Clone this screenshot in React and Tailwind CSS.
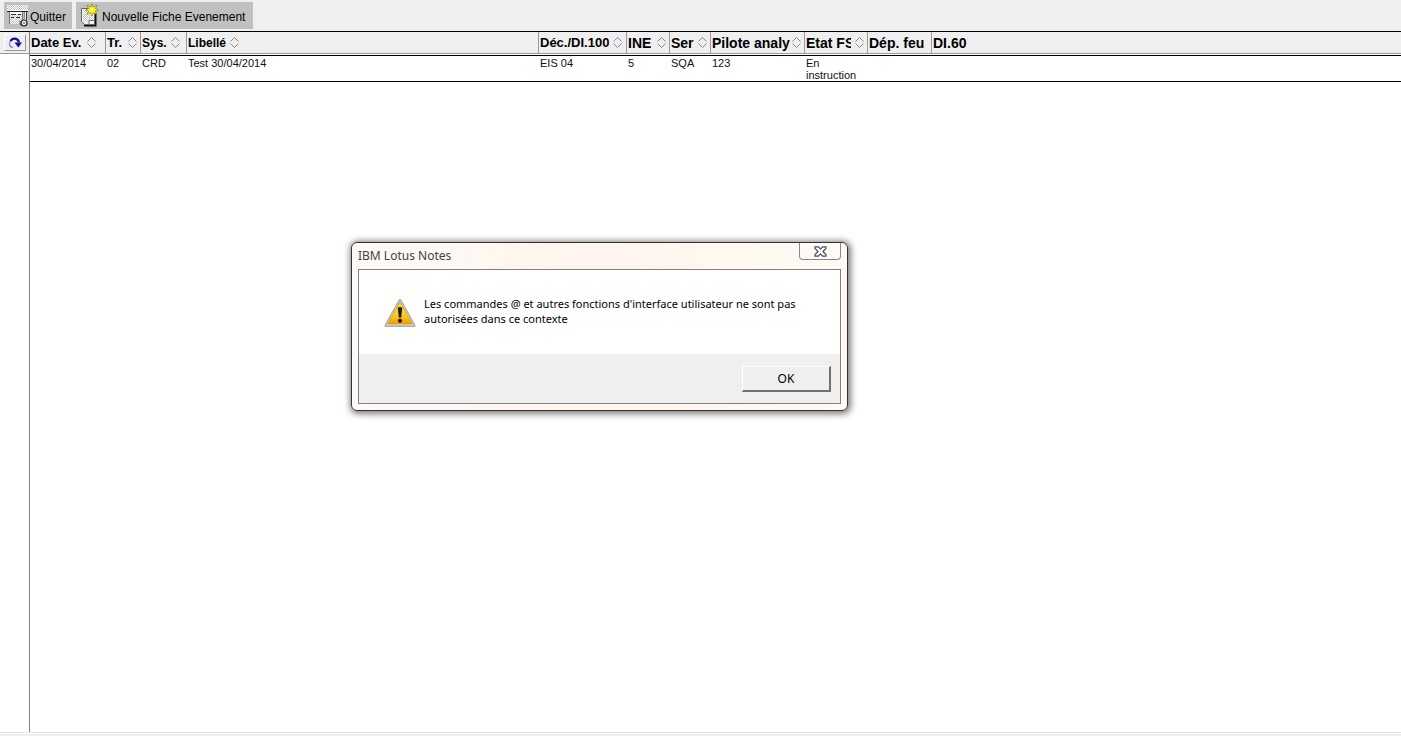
import { useState } from "react";

const columns = [
  { id: "date", label: "Date Ev.", width: "w-[76px]", text: "gap-1.5 text-[13px]", sortable: true },
  { id: "tr", label: "Tr.", width: "w-[35px]", text: "gap-1.5 text-[13px]", sortable: true },
  { id: "sys", label: "Sys.", width: "w-[46px]", text: "gap-1 text-[12px]", sortable: true },
  { id: "label", label: "Libellé", width: "w-[352px]", text: "gap-1 text-[12px]", sortable: true },
  { id: "dec", label: "Déc./DI.100", width: "w-[88px]", text: "gap-1 text-[13px]", sortable: true },
  { id: "ine", label: "INE", width: "w-[43px]", text: "justify-between text-[14px]", sortable: true },
  { id: "ser", label: "Ser", width: "w-[41px]", text: "justify-between text-[14px]", sortable: true },
  { id: "pilote", label: "Pilote analy", width: "w-[94px]", text: "justify-between text-[14px]", sortable: true },
  { id: "etat", label: "Etat FS", width: "w-[63px]", text: "gap-1 text-[14px]", sortable: true },
  { id: "dep", label: "Dép. feu", width: "w-[64px]", text: "text-[14px]", sortable: false },
  { id: "di60", label: "DI.60", width: "", text: "text-[14px]", sortable: false },
];

const rows = [
  {
    date: "30/04/2014",
    tr: "02",
    sys: "CRD",
    label: "Test 30/04/2014",
    dec: "EIS 04",
    ine: "5",
    ser: "SQA",
    pilote: "123",
    etat: "En instruction",
    dep: "",
    di60: "",
  },
];

function QuitIcon() {
  return (
    <svg width="22" height="22" viewBox="0 0 22 22" shapeRendering="crispEdges">
      <defs>
        <pattern id="dither" width="2" height="2" patternUnits="userSpaceOnUse">
          <rect width="2" height="2" fill="#c4c4c4" />
          <rect width="1" height="1" fill="#fff" />
          <rect x="1" y="1" width="1" height="1" fill="#fff" />
        </pattern>
      </defs>
      <rect width="21" height="6" fill="url(#dither)" />
      <rect y="5" width="21" height="1" fill="#fff" />
      <rect y="6" width="21" height="1" fill="#222" />
      <rect x="2" y="7" width="14" height="12" fill="#fff" />
      <rect x="3" y="9" width="12" height="10" fill="url(#dither)" />
      <path d="M4 9.500h5M11 9.500h3M4 12.500h3M9 12.500h4" stroke="#333" />
      <path d="M2.500 7v12M15.500 7v9" stroke="#777" />
      <path d="M17 7h3v8h-3z" fill="#f4f4f4" />
      <path d="M19.500 7v8" stroke="#333" />
      <path d="M17.500 7v7" stroke="#888" />
      <g shapeRendering="auto">
        <path d="M12.500 16.500l3 1.500M12.500 18.500l2 1.500" stroke="#222" />
        <circle cx="17" cy="18" r="3" fill="#eee" stroke="#222" strokeWidth="1.200" />
        <circle cx="17" cy="18" r="1" fill="#777" />
      </g>
    </svg>
  );
}

function NewDocIcon() {
  return (
    <svg width="20" height="24" viewBox="0 0 20 24">
      <path d="M4 21.500h11.500V9" fill="none" stroke="#111" strokeWidth="2" />
      <path d="M1.500 4.500h13v16h-10l-3-3z" fill="#f1f1f1" stroke="#666" />
      <rect x="3" y="6" width="10" height="11" fill="url(#dither)" />
      <path d="M9 20.500v-4h5" fill="#fff" stroke="#666" />
      <path
        d="M12 0l1.200 3L17 1.500 15.400 4.600 18.500 6l-3.100 1 1.600 3.500-3.600-1.700L12 12l-1.300-3.200L7 10.500 8.600 7 5.500 6l3.100-1.400L7 1.500 10.700 3z"
        fill="#f5ee24"
        stroke="#77751a"
        strokeWidth=".6"
      />
      <circle cx="12" cy="5.800" r="1.500" fill="#fffdb0" />
    </svg>
  );
}

function RefreshIcon() {
  return (
    <svg width="14" height="12" viewBox="0 0 14 12">
      <path d="M5 10.500C1 10 .5 5.500 3 3.500" fill="none" stroke="#8b93cf" strokeWidth="1.500" />
      <path d="M2.500 4C4.500.500 10 .500 11 5.500" fill="none" stroke="#10109a" strokeWidth="2.200" />
      <path d="M6.500 5.500H14L10.300 10.500z" fill="#10109a" />
    </svg>
  );
}

function SortIcon() {
  return (
    <svg className="shrink-0" width="9" height="11" viewBox="0 0 9 11">
      <path d="M.5 4.500l4-4 4 4M.5 6.500l4 4 4-4" fill="none" stroke="#888" />
    </svg>
  );
}

function WarningIcon() {
  return (
    <svg className="shrink-0" width="32" height="30" viewBox="0 0 32 30">
      <defs>
        <linearGradient id="warn" x1="0" y1="0" x2="0" y2="1">
          <stop offset="0" stopColor="#f0dc3a" />
          <stop offset=".55" stopColor="#fbd21c" />
          <stop offset="1" stopColor="#f39a08" />
        </linearGradient>
      </defs>
      <path d="M16 2.500L30 27.500H2z" fill="#c9cbd0" stroke="#a9abb0" strokeWidth="3" strokeLinejoin="round" />
      <path d="M16 3L29.500 27h-27z" fill="#dcdde0" stroke="#dcdde0" strokeLinejoin="round" />
      <path d="M16 4L28.500 26h-25z" fill="url(#warn)" stroke="#d99b08" strokeWidth=".8" strokeLinejoin="round" />
      <path d="M13.800 10q2.200-1.800 4.400 0l-1 9.500h-2.400z" fill="#1c1a08" />
      <circle cx="16" cy="22.800" r="2.100" fill="#1c1a08" />
    </svg>
  );
}

function CloseIcon() {
  return (
    <svg width="13" height="11" viewBox="0 0 13 11">
      <path
        d="M1 .8h3.500l2 2.300 2-2.300H12v1.500L9 5.500l3 3.200v1.500H8.500l-2-2.300-2 2.300H1V8.700l3-3.200-3-3.200z"
        fill="#fff"
        stroke="#44495c"
        strokeWidth="1.200"
        strokeLinejoin="round"
      />
    </svg>
  );
}

function Toolbar() {
  return (
    <div className="flex h-8 items-start gap-1 border-b border-black bg-[#efefef] px-1 pt-0.5 text-[12px]">
      <button type="button" className="flex h-[27px] items-center gap-px bg-[#c0c0c0] pr-1.5 pl-[3px]">
        <QuitIcon />
        <span className="pt-0.5">Quitter</span>
      </button>
      <button type="button" className="flex h-[27px] items-center gap-0.5 bg-[#c0c0c0] pr-2 pl-1">
        <NewDocIcon />
        <span className="pt-0.5">Nouvelle Fiche Evenement</span>
      </button>
    </div>
  );
}

function EventTable() {
  return (
    <table className="w-full table-fixed border-separate border-spacing-0 text-left">
      <thead>
        <tr className="bg-[#efefef]">
          {columns.map((col) => (
            <th
              key={col.id}
              className={`${col.width} h-[22px] border-r border-b border-[#9a9a9a] p-0 font-bold last:border-r-0`}
            >
              {col.sortable ? (
                <button type="button" className={`flex w-full items-center pr-[3px] pl-px leading-5 ${col.text}`}>
                  <span className="min-w-0 overflow-hidden whitespace-nowrap">{col.label}</span>
                  <SortIcon />
                </button>
              ) : (
                <span className={`block pl-px leading-5 whitespace-nowrap ${col.text}`}>{col.label}</span>
              )}
            </th>
          ))}
        </tr>
      </thead>
      <tbody>
        {/* thin white gap, then the rule above the first row */}
        <tr>
          <td colSpan={columns.length} className="h-0.5 border-b border-black p-0" />
        </tr>
        {rows.map((row) => (
          <tr key={row.label}>
            {columns.map((col) => (
              <td
                key={col.id}
                className="h-[26px] border-b border-black pt-px pr-2 pb-0 pl-px align-top text-[11px] leading-3 text-[#111]"
              >
                {row[col.id]}
              </td>
            ))}
          </tr>
        ))}
      </tbody>
    </table>
  );
}

function MessageDialog({ onClose }) {
  return (
    <div
      role="alertdialog"
      aria-labelledby="dialog-title"
      aria-describedby="dialog-text"
      className="absolute top-[242px] left-[351px] w-[497px] rounded-md border border-[#333] bg-gradient-to-r from-[#fffaf7] via-[#fff4ee] to-[#fffaf5] px-1.5 pb-1.5 font-['Noto_Sans','Open_Sans',sans-serif] text-[12px] shadow-[1px_1px_6px_2px_rgba(0,0,0,0.5)]"
    >
      <div className="flex h-[26px] items-start justify-between">
        <h1 id="dialog-title" className="pt-1 leading-[18px] text-[#444]">
          IBM Lotus Notes
        </h1>
        <button
          type="button"
          aria-label="Fermer"
          onClick={onClose}
          className="flex h-[17px] w-[42px] items-center justify-center rounded-b border border-t-0 border-[#888] bg-[#fffaf6]"
        >
          <CloseIcon />
        </button>
      </div>
      <div className="border border-[#808080]">
        <div className="flex h-[84px] items-start gap-2 bg-white pt-7 pr-8 pl-[25px]">
          <WarningIcon />
          <p id="dialog-text" className="-mt-0.5 text-[11px] leading-[15px] text-black">
            Les commandes @ et autres fonctions d'interface utilisateur ne sont pas autorisées dans ce contexte
          </p>
        </div>
        <div className="flex h-[49px] justify-end bg-[#efefef] pt-3 pr-[9px]">
          <button
            type="button"
            onClick={onClose}
            className="h-[26px] w-[89px] border-t border-r-2 border-b-2 border-l border-t-white border-r-[#6f7175] border-b-[#6f7175] border-l-white bg-[#efefef]"
          >
            OK
          </button>
        </div>
      </div>
    </div>
  );
}

export default function App() {
  const [isOpen, setIsOpen] = useState(true);

  return (
    <div className="relative flex min-h-screen flex-col bg-white font-['Liberation_Sans',Arial,sans-serif] text-black">
      <Toolbar />
      <main className="flex flex-1">
        <div className="w-[30px] shrink-0 border-r border-[#808080]">
          <div className="flex h-[22px] items-center justify-center border-b border-[#9a9a9a] bg-[#efefef]">
            <button
              type="button"
              aria-label="Actualiser"
              className="flex h-[17px] w-[22px] items-center justify-center border border-t-white border-r-[#999] border-b-[#999] border-l-white"
            >
              <RefreshIcon />
            </button>
          </div>
        </div>
        <div className="min-w-0 flex-1">
          <EventTable />
        </div>
      </main>
      <footer className="h-1 border-t border-b-2 border-t-[#e4e4e4] border-b-[#eeeeee]" />
      {isOpen && <MessageDialog onClose={() => setIsOpen(false)} />}
    </div>
  );
}
